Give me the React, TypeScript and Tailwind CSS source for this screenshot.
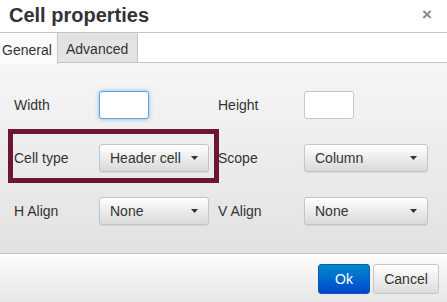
import React from "react";

const Caret = () => (
  <svg width="7" height="4" viewBox="0 0 7 4" className="shrink-0">
    <path d="M0 0 L7 0 L3.5 4 Z" fill="#333" />
  </svg>
);

const Select = ({ value, w }: { value: string; w: string }) => (
  <div
    className={`${w} h-[28px] flex items-center justify-between pl-[10px] pr-[10px] rounded-[3px] border border-[#c5c5c5] bg-gradient-to-b from-[#ffffff] to-[#d9d9d9] text-[14px] text-[#333] shadow-[0_1px_1px_rgba(0,0,0,0.08)]`}
  >
    <span>{value}</span>
    <Caret />
  </div>
);

export default function App() {
  return (
    <div
      className="w-[447px] h-[302px] overflow-hidden bg-white flex flex-col relative text-[#333]"
      style={{ fontFamily: '"Liberation Sans", Arial, sans-serif' }}
    >
      {/* header */}
      <div className="h-[32px] flex items-center justify-between pl-[9px] pr-[15px] pb-[3px] bg-white">
        <span className="text-[20px] font-bold leading-none text-[#333]">Cell properties</span>
        <span className="text-[17px] font-bold text-[#8a8a8a] leading-none">×</span>
      </div>
      {/* tabs */}
      <div className="h-[31px] flex border-t border-b border-[#c5c5c5] bg-white">
        <div className="w-[58px] h-[31px] flex items-center pt-[3px] pl-[2px] text-[14px] bg-[#fbfbfb] border-r border-[#c5c5c5] relative z-10 -mb-[1px]">
          General
        </div>
        <div className="w-[80px] flex items-center pt-[3px] pl-[8px] text-[14px] bg-[#e3e3e3] border-r border-[#c5c5c5]">
          Advanced
        </div>
      </div>
      {/* body */}
      <div className="flex-1 bg-gradient-to-b from-[#f6f6f6] to-[#e2e2e2] pt-[28px] pl-[14px] flex flex-col gap-[25px] text-[14px]">
        <div className="flex items-center h-[28px]">
          <span className="w-[85px]">Width</span>
          <div className="w-[50px] h-[28px] rounded-[3px] bg-white border border-[#59a5e5] shadow-[0_0_4px_rgba(89,165,229,0.75)]" />
          <span className="w-[86px] ml-[69px]">Height</span>
          <div className="w-[50px] h-[28px] rounded-[3px] bg-white border border-[#c5c5c5]" />
        </div>
        <div className="flex items-center h-[28px]">
          <span className="w-[85px]">Cell type</span>
          <Select value="Header cell" w="w-[110px]" />
          <span className="w-[86px] ml-[9px]">Scope</span>
          <Select value="Column" w="w-[124px]" />
        </div>
        <div className="flex items-center h-[28px]">
          <span className="w-[85px]">H Align</span>
          <Select value="None" w="w-[110px]" />
          <span className="w-[86px] ml-[9px]">V Align</span>
          <Select value="None" w="w-[124px]" />
        </div>
      </div>
      {/* footer */}
      <div className="h-[49px] border-t border-[#c5c5c5] bg-gradient-to-b from-[#fdfdfd] to-[#e6e6e6] flex items-start justify-end pt-[10px] pr-[8px] gap-[3px]">
        <div className="w-[52px] h-[30px] rounded-[3px] border border-[#0b5ca8] bg-gradient-to-b from-[#0088cc] to-[#0044cc] text-white text-[14px] flex items-center justify-center">
          Ok
        </div>
        <div className="w-[66px] h-[30px] rounded-[3px] border border-[#c5c5c5] bg-gradient-to-b from-[#ffffff] to-[#dcdcdc] text-[#333] text-[14px] flex items-center justify-center">
          Cancel
        </div>
      </div>
      {/* highlight annotation */}
      <div className="absolute left-[8px] top-[129px] w-[211px] h-[54px] border-[5px] border-[#6e1535] pointer-events-none" />
    </div>
  );
}
